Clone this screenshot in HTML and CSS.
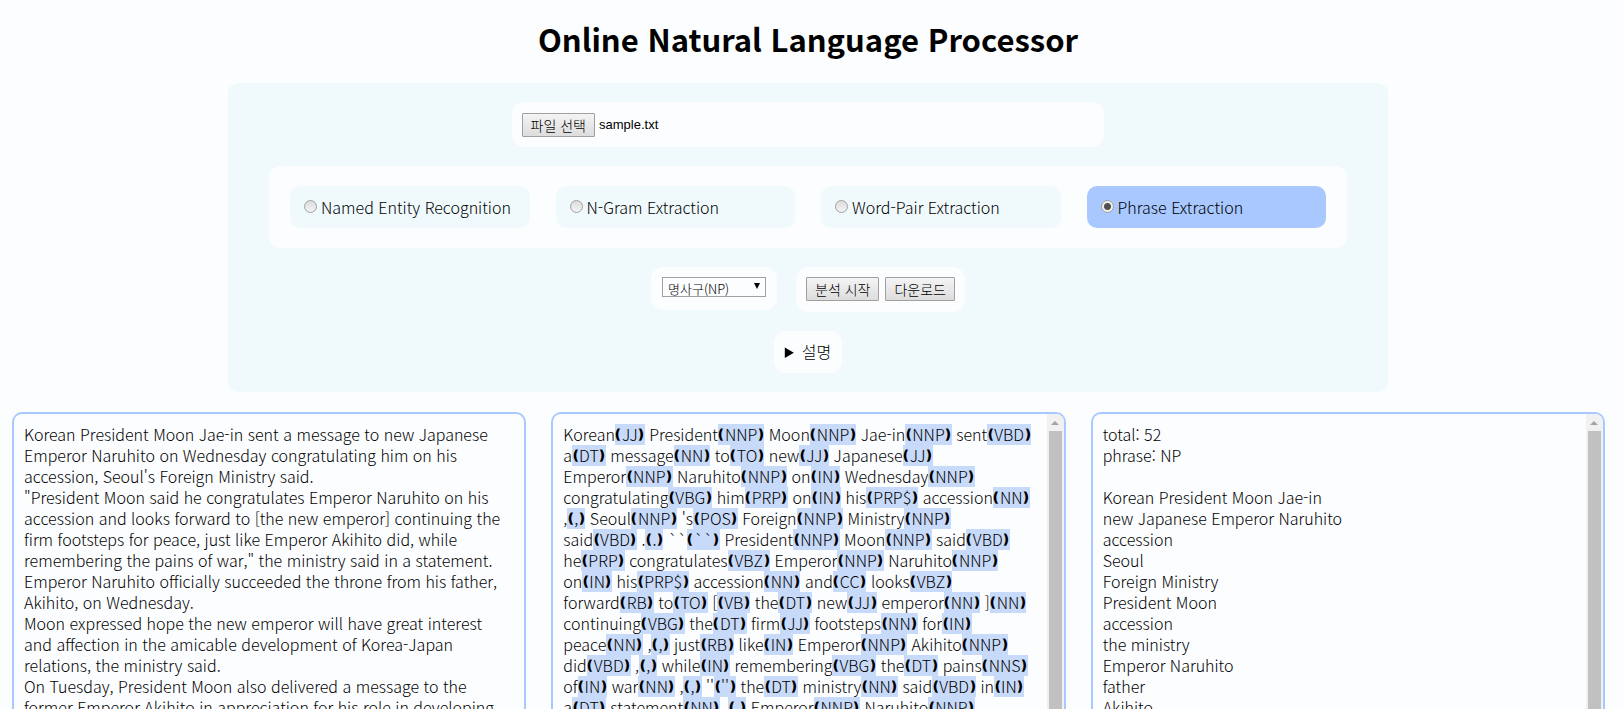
FILE: index.html
```html
<!DOCTYPE html>
<html lang="ko">
<head>
<meta charset="utf-8">
<title>Online Natural Language Processor</title>
<link rel="stylesheet" href="styles.css">
</head>
<body>
<header><h1 class="title">Online Natural Language Processor</h1></header>
<main>
<form class="panel">
<div class="card file">
<input class="file-input" type="file" id="source">
<label class="btn" for="source">파일 선택</label>
<span class="file-name">sample.txt</span>
</div>
<div class="card modes">
<label class="mode"><input type="radio" name="mode">Named Entity Recognition</label>
<label class="mode"><input type="radio" name="mode">N-Gram Extraction</label>
<label class="mode"><input type="radio" name="mode">Word-Pair Extraction</label>
<label class="mode active"><input type="radio" name="mode" checked>Phrase Extraction</label>
</div>
<div class="actions">
<div class="card choice"><select class="select" aria-label="구 종류"><option>명사구(NP)</option></select></div>
<div class="card buttons"><button class="btn" type="button">분석 시작</button><button class="btn" type="button">다운로드</button></div>
</div>
<details class="card help"><summary>설명</summary></details>
</form>
<div class="panes">
<section class="pane"><div class="text" id="plain">Korean President Moon Jae-in sent a message to new Japanese
Emperor Naruhito on Wednesday congratulating him on his
accession, Seoul's Foreign Ministry said.
"President Moon said he congratulates Emperor Naruhito on his
accession and looks forward to [the new emperor] continuing the
firm footsteps for peace, just like Emperor Akihito did, while
remembering the pains of war," the ministry said in a statement.
Emperor Naruhito officially succeeded the throne from his father,
Akihito, on Wednesday.
Moon expressed hope the new emperor will have great interest
and affection in the amicable development of Korea-Japan
relations, the ministry said.
On Tuesday, President Moon also delivered a message to the
former Emperor Akihito in appreciation for his role in developing</div></section>
<section class="pane"><div class="text" id="tagged"></div><div class="bar"><span class="up"></span><span class="thumb"></span></div></section>
<section class="pane"><div class="text">total: 52
phrase: NP

Korean President Moon Jae-in
new Japanese Emperor Naruhito
accession
Seoul
Foreign Ministry
President Moon
accession
the ministry
Emperor Naruhito
father
Akihito</div><div class="bar"><span class="up"></span><span class="thumb"></span></div></section>
</div>
</main>
<script src="tags.js"></script>
</body>
</html>
```
FILE: tags.js
```js
const lines = [
  "Korean/JJ President/NNP Moon/NNP Jae-in/NNP sent/VBD",
  "a/DT message/NN to/TO new/JJ Japanese/JJ",
  "Emperor/NNP Naruhito/NNP on/IN Wednesday/NNP",
  "congratulating/VBG him/PRP on/IN his/PRP$ accession/NN",
  ",/, Seoul/NNP 's/POS Foreign/NNP Ministry/NNP",
  "said/VBD ./. ``/`` President/NNP Moon/NNP said/VBD",
  "he/PRP congratulates/VBZ Emperor/NNP Naruhito/NNP",
  "on/IN his/PRP$ accession/NN and/CC looks/VBZ",
  "forward/RB to/TO [/VB the/DT new/JJ emperor/NN ]/NN",
  "continuing/VBG the/DT firm/JJ footsteps/NN for/IN",
  "peace/NN ,/, just/RB like/IN Emperor/NNP Akihito/NNP",
  "did/VBD ,/, while/IN remembering/VBG the/DT pains/NNS",
  "of/IN war/NN ,/, ''/'' the/DT ministry/NN said/VBD in/IN",
  "a/DT statement/NN ./. Emperor/NNP Naruhito/NNP"
];
const out = document.getElementById("tagged");

function bracket(glyph) {
  const el = document.createElement("span");
  el.className = "bracket";
  el.textContent = glyph;
  return el;
}

lines.forEach((line, i) => {
  if (i) out.append("\n");
  line.split(" ").forEach((pair, j) => {
    const cut = pair.indexOf("/");
    const tag = document.createElement("span");
    tag.className = "tag";
    tag.append(bracket("❪"), pair.slice(cut + 1), bracket("❫"));
    out.append((j ? " " : "") + pair.slice(0, cut), tag);
  });
});
```
FILE: styles.css
```css
* { box-sizing: border-box; }
body {
  margin: 0;
  height: 100vh;
  overflow: hidden;
  display: flex;
  flex-direction: column;
  background: #fcfdff;
  color: #000;
  font: 16px/21px "Noto Sans CJK KR", sans-serif;
  font-weight: 300;
}
header { padding: 17px 15px 3px 8px; }
main { flex: 1; min-height: 0; display: flex; flex-direction: column; }
.title { margin: 0; font-size: 31px; line-height: 43px; text-align: center; font-weight: 700; }
.panel {
  margin: 20px 235px 0 228px;
  padding: 19px 41px 19px;
  border-radius: 10px;
  background: #f0fafd;
  display: flex;
  flex-direction: column;
  align-items: center;
}
.card { background: #fcfdff; border-radius: 12px; }
.file { width: 55%; padding: 10px; height: 45px; display: flex; align-items: center; gap: 4px; }
.file-input { position: absolute; opacity: 0; width: 1px; height: 1px; }
.file-name { font: 13px/20px "Liberation Sans", sans-serif; }
.btn {
  height: 24px;
  padding: 0 8px;
  border: 1px solid #a0a0a0;
  border-radius: 1px;
  background: linear-gradient(#f4f4f4, #dddddd);
  color: #000;
  font: 300 14px/22px "Noto Sans CJK KR", sans-serif;
}
.modes { align-self: stretch; margin-top: 19px; padding: 20px 21px; display: grid; grid-template-columns: repeat(4, 1fr); gap: 26px; height: 82px; }
.mode { display: flex; align-items: center; padding: 0 14px; border-radius: 10px; background: #f0fafd; }
.mode input { margin: 0 4px 2px 0; width: 13px; height: 13px; appearance: none; border: 1px solid #a0a0a0; border-radius: 50%; background: linear-gradient(#dcdcdc, #f4f4f4); }
.mode input:checked { background: radial-gradient(circle, #505050 0 3px, #eeeeee 4px); }
.mode.active { background: #a8c8ff; }
.actions { display: flex; gap: 19px; margin-top: 19px; align-items: flex-start; }
.choice { position: relative; padding: 10px 11px; height: 43px; }
.choice::after {
  content: "";
  position: absolute;
  top: 16px;
  right: 17px;
  border: 3px solid transparent;
  border-top: 6px solid #000;
  border-bottom: 0;
  pointer-events: none;
}
.select {
  display: block; width: 104px; height: 20px; padding: 2px 5px 0; appearance: none;
  border: 1px solid #a0a0a0; border-radius: 0; background: #fcfdff; color: #000;
  font: 300 13px/18px "Noto Sans CJK KR", sans-serif;
}
.buttons { display: flex; gap: 6px; padding: 10px; height: 45px; }
.help { margin-top: 19px; padding: 10px 11px; height: 42px; }
.panes { flex: 1; min-height: 0; display: grid; grid-template-columns: repeat(3, minmax(0, 1fr)); gap: 25px; margin: 20px 18px 0 12px; }
.pane { display: flex; overflow: hidden; border: 2px solid #a8c8ff; border-bottom: 0; border-radius: 10px 10px 0 0; }
.text { flex: 1; min-width: 0; padding: 10px 10px 0; white-space: pre; }
.tag { display: inline-block; height: 21px; vertical-align: top; background: #c8dafa; }
.bracket { display: inline-flex; justify-content: center; width: 7px; height: 21px; vertical-align: top; font-family: "DejaVu Sans", sans-serif; font-size: 14px; }
.bar { flex: none; width: 17px; background: #f1f1f1; padding: 0 2px; display: flex; flex-direction: column; align-items: center; }
.up { margin: 7px 0 6px; border: 4px solid transparent; border-top: 0; border-bottom: 4px solid #a3a3a3; }
.thumb { flex: 1; width: 13px; background: #c1c1c1; }
```
